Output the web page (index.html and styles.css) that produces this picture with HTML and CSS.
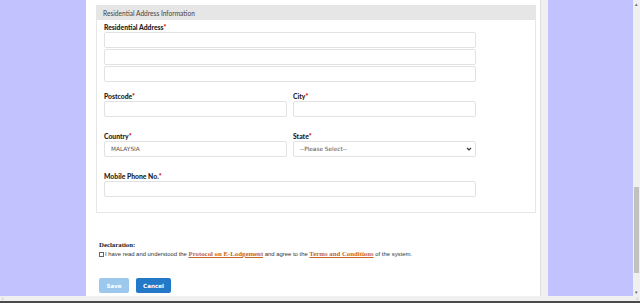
FILE: index.html
```html
<!DOCTYPE html>
<html lang="en">
<head>
    <meta charset="UTF-8">
    <title>Residential Address</title>
    <link rel="stylesheet" href="styles.css">
</head>
<body>
<div class="screen">
    <div class="viewport">
        <div class="page">
            <div class="sheet">
                <div class="panel">
                    <div class="panel-head">Residential Address Information</div>
                    <div class="panel-body">
                        <div class="field full">
                            <label>Residential Address<em>*</em></label>
                            <input type="text">
                            <input type="text">
                            <input type="text">
                        </div>
                        <div class="row first">
                            <div class="field">
                                <label>Postcode<em>*</em></label>
                                <input type="text">
                            </div>
                            <div class="field">
                                <label>City<em>*</em></label>
                                <input type="text">
                            </div>
                        </div>
                        <div class="row">
                            <div class="field">
                                <label>Country<em>*</em></label>
                                <input type="text" value="MALAYSIA">
                            </div>
                            <div class="field">
                                <label>State<em>*</em></label>
                                <div class="select">
                                    <span>--Please Select--</span>
                                    <svg width="6" height="4" viewBox="0 0 6 4"><path d="M1 1 L3 3 L5 1" fill="none" stroke="#333" stroke-width="1.1"/></svg>
                                </div>
                            </div>
                        </div>
                        <div class="row">
                            <div class="field full">
                                <label>Mobile Phone No.<em>*</em></label>
                                <input type="text">
                            </div>
                        </div>
                    </div>
                </div>

                <div class="declaration">
                    <div class="decl-title">Declaration:</div>
                    <div class="decl-line"><span class="check"></span>I have read and understood the <a href="">Protocol on E-Lodgement</a> and agree to the <a href="">Terms and Conditions</a> of the system.</div>
                </div>

                <div class="actions">
                    <button class="btn save">Save</button>
                    <button class="btn cancel">Cancel</button>
                </div>
            </div>
        </div>
        <div class="vscroll">
            <span class="arrow">&#9652;</span>
            <span class="track"><span class="thumb"></span></span>
            <span class="arrow">&#9662;</span>
        </div>
    </div>
    <div class="hscroll">
        <span class="harrow">&#8249;</span>
        <span class="harrow">&#8250;</span>
    </div>
    <div class="taskbar"></div>
</div>
</body>
</html>
```

FILE: styles.css
```css
* {
    margin: 0;
    padding: 0;
    box-sizing: border-box;
}
html, body {
    width: 640px;
    height: 303px;
    overflow: hidden;
}
body {
    background: #c2c2fe;
    font-family: Lato, "Liberation Sans", sans-serif;
    color: #222;
}
.screen {
    display: flex;
    flex-direction: column;
    height: 303px;
}
.viewport {
    display: flex;
    height: 296px;
}
.page {
    flex: 1;
    padding-left: 86px;
}
.sheet {
    width: 455px;
    height: 296px;
    background: #fff;
    border-right: 1px solid #dedede;
    box-shadow: 7px 0 0 #f0f0f0;
    padding-top: 5px;
}

/* 地址面板 */
.panel {
    width: 440px;
    margin-left: 10px;
    height: 208px;
    border: 1px solid #e6e6e6;
}
.panel-head {
    height: 14px;
    background: #e6e6e6;
    font-size: 6.6px;
    line-height: 14px;
    padding-left: 6px;
    color: #444;
}
.panel-body {
    width: 372px;
    margin-left: 7px;
    padding-top: 3px;
}
.field {
    display: flex;
    flex-direction: column;
    gap: 1px;
    flex: 1;
}
.field label {
    font-size: 6.8px;
    font-weight: 900;
    line-height: 8px;
    color: #222;
}
.field em {
    color: #c00;
    font-style: normal;
}
.field input,
.select {
    height: 16px;
    border: 1px solid #e2e2e2;
    border-radius: 2px;
    font-family: "DejaVu Sans", sans-serif;
    font-size: 5.8px;
    color: #555;
    padding-left: 6px;
    outline: none;
}
.row {
    display: flex;
    gap: 6px;
    margin-top: 15px;
}
.row.first {
    margin-top: 10px;
}
.select {
    display: flex;
    align-items: center;
    justify-content: space-between;
    padding-right: 3px;
}

/* 声明 */
.declaration {
    margin: 28px 0 0 13px;
}
.decl-title {
    font-family: "Liberation Serif", serif;
    font-size: 6.8px;
    font-weight: bold;
    line-height: 8px;
    color: #222;
}
.decl-line {
    font-family: "Liberation Sans", sans-serif;
    font-size: 5.9px;
    line-height: 9px;
    color: #333;
    white-space: nowrap;
}
.check {
    display: inline-block;
    vertical-align: -1px;
    width: 5px;
    height: 5px;
    border: 1px solid #666;
    margin-right: 1px;
}
.decl-line a {
    font-family: "Liberation Serif", serif;
    font-weight: bold;
    font-size: 6.8px;
    color: #c8642a;
    text-decoration: underline;
}

.actions {
    display: flex;
    gap: 7px;
    margin: 19px 0 0 13px;
}
.btn {
    height: 15px;
    border: 0;
    border-radius: 2px;
    color: #fff;
    font-family: "DejaVu Sans", sans-serif;
    font-size: 5.6px;
    font-weight: bold;
}
.save {
    width: 30px;
    background: #9cc8ee;
}
.cancel {
    width: 35px;
    background: #2379c8;
}

/* 滚动条 */
.vscroll {
    width: 7px;
    background: #f0f0f0;
    display: flex;
    flex-direction: column;
    align-items: center;
    font-size: 5px;
    color: #666;
}
.vscroll .arrow {
    height: 8px;
    line-height: 8px;
}
.track {
    flex: 1;
    width: 100%;
    padding: 179px 1px 10px;
}
.thumb {
    display: block;
    height: 86px;
    background: #c1c1c1;
}
.hscroll {
    height: 5px;
    background: #f0f0f0;
    display: flex;
    justify-content: space-between;
    padding: 0 2px 0 2px;
    font-size: 5px;
    line-height: 5px;
    color: #777;
}
.taskbar {
    height: 2px;
    background: #4a4a4a;
}
```
